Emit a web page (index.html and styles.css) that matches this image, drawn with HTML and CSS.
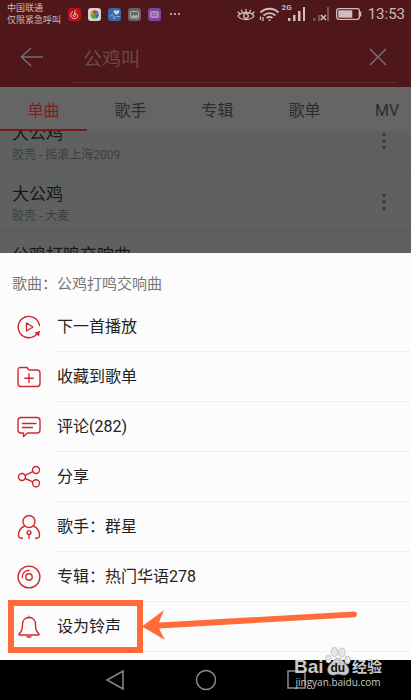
FILE: index.html
```
<!DOCTYPE html>
<html lang="zh-CN">
<head>
    <meta charset="UTF-8">
    <meta name="viewport" content="width=device-width, initial-scale=1.0">
    <title>公鸡叫</title>
    <link rel="stylesheet" href="styles.css">
</head>
<body>
    <header class="header">
        <div class="status">
            <div class="carrier">中国联通<br>仅限紧急呼叫</div>
            <div class="apps">
                <svg class="app" viewBox="0 0 13 13"><rect width="13" height="13" rx="3" fill="#b8121a"/><path d="M8 2.500C6.800 2.200 6.500 3.300 6.800 5L7.300 7.500C7.500 9 5.200 9 5.200 7.400C5.200 5.500 8.800 5 9.600 7.300C10 10.500 6 11.500 4 9.700C1.800 7.500 2.800 4.500 5 3.700" fill="none" stroke="#e3c9c9"/></svg>
                <svg class="app" viewBox="0 0 13 13"><rect width="13" height="13" rx="3" fill="#d8d3cf"/><path d="M2.300 6A4.500 4.500 0 0 1 6 2.300L8 5Z" fill="#d5891c"/><path d="M6 2.300A4.500 4.500 0 0 1 10.800 5L5 6Z" fill="#c63a35"/><path d="M10.800 5.500A4.500 4.500 0 0 1 8 10.500L6 6Z" fill="#3370b8"/><path d="M2.300 6.500L7.500 6L7.500 10.700A4.500 4.500 0 0 1 2.300 6.500" fill="#57a033"/></svg>
                <svg class="app" viewBox="0 0 13 13"><rect width="13" height="13" rx="3" fill="#3b68a8"/><path d="M8.500 7L5.800 4.500C5 2.500 7.500 1.500 8.500 3.200C9.500 1.500 12 2.500 11.200 4.500Z" fill="#d9d5dc"/><path d="M1 8H3L4.500 6L6 11L7.500 8.500H12" fill="none" stroke="#9dadd0" stroke-width=".8"/></svg>
                <svg class="app" viewBox="0 0 13 13"><rect width="13" height="13" rx="3" fill="#696468"/><rect x="2.500" y="3.500" width="8" height="6.500" rx="1" fill="none" stroke="#b9b0b2"/><path d="M3 9.500L5.500 6.500L7 8L8.500 6.500L10 9.500Z" fill="#b9b0b2"/></svg>
                <svg class="app" viewBox="0 0 13 13"><rect width="13" height="13" rx="3" fill="#8245a6"/><rect x="2.500" y="3.500" width="8" height="6" rx="1" fill="#aa86bd" stroke="#b79bc5" stroke-width=".8"/><path d="M4 5.500H9.500M4 7.500H9.500" stroke="#8245a6" stroke-dasharray="1 .8"/></svg>
                <svg class="more-apps" viewBox="0 0 12 4" fill="#d2c1c1"><circle cx="2" cy="2" r="1.100"/><circle cx="6" cy="2" r="1.100"/><circle cx="10" cy="2" r="1.100"/></svg>
            </div>
            <div class="signals">
                <svg width="20" height="16" viewBox="0 0 20 16" fill="none" stroke="#d0bebe" stroke-width="1.300" stroke-linecap="round"><path d="M2 10C5 5.300 15 5.300 18 10C15 14.700 5 14.700 2 10Z"/><circle cx="10" cy="10" r="2.300"/><path d="M10 3.500V5.500M5.500 4.200L6.300 6M14.500 4.200L13.700 6M2 6L3.500 7.500M18 6L16.500 7.500"/></svg>
                <svg width="22" height="16" viewBox="0 0 22 16" fill="none" stroke="#d0bebe" stroke-width="1.800"><path d="M2.500 6.500C7.500 1.500 15.500 1.500 20.500 6.500M5.500 9.500C9 6.200 14 6.200 17.500 9.500M8.500 12C10.500 10.300 12.500 10.300 14.500 12"/><circle cx="11.500" cy="14" r="1" fill="#d0bebe" stroke="none"/><path d="M2.500 10.500V14M5 11V15" stroke-width="1.300"/></svg>
                <span class="network">2G</span>
                <svg width="18" height="14" viewBox="0 0 18 14" fill="#d0bebe"><path d="M0 11H2.500V14H0ZM5 8H7.500V14H5ZM10 4H12.500V14H10ZM15 0H17V14H15Z"/></svg>
                <svg class="sim" width="18" height="14" viewBox="0 0 18 14"><path d="M1 11H3.500V14H1ZM6 8H8.500V14H6ZM15 0H17V14H15Z" fill="#7d5455"/><path d="M9 8L14 13M14 8L9 13" stroke="#d0bebe" stroke-width="1.500"/></svg>
                <svg class="battery" width="26" height="12" viewBox="0 0 26 12"><rect x=".7" y=".7" width="22.600" height="10.600" rx="2" fill="none" stroke="#d0bebe" stroke-width="1.300"/><rect x="2.300" y="2.300" width="14" height="7.400" fill="#d0bebe"/><path d="M24.500 3.500V8.500" stroke="#d0bebe" stroke-width="1.500"/></svg>
                <time class="time">13:53</time>
            </div>
        </div>
        <form class="search">
            <button class="icon-button" type="button" aria-label="返回">
                <svg width="24" height="20" viewBox="0 0 24 20"><path d="M23 10H1M11 1L1.500 10L11 19"/></svg>
            </button>
            <div class="search-field">
                <input class="search-input" type="text" value="公鸡叫" aria-label="搜索">
                <button class="icon-button" type="button" aria-label="清除">
                    <svg width="18" height="18" viewBox="0 0 18 18"><path d="M1 1L17 17M17 1L1 17"/></svg>
                </button>
            </div>
        </form>
    </header>

    <nav class="tabs">
        <a href="#" class="tab active">单曲</a>
        <a href="#" class="tab">歌手</a>
        <a href="#" class="tab">专辑</a>
        <a href="#" class="tab">歌单</a>
        <a href="#" class="tab tab-last">MV</a>
    </nav>

    <main class="songs">
        <ul class="song-list">
            <li class="song">
                <div>
                    <h2 class="song-name">大公鸡</h2>
                    <p class="song-info">胶壳 - 摇滚上海2009</p>
                </div>
                <button class="song-more" type="button" aria-label="更多"><svg width="4" height="18" viewBox="0 0 4 18"><circle cx="2" cy="2.500" r="1.800"/><circle cx="2" cy="9" r="1.800"/><circle cx="2" cy="15.500" r="1.800"/></svg></button>
            </li>
            <li class="song">
                <div>
                    <h2 class="song-name">大公鸡</h2>
                    <p class="song-info">胶壳 - 大麦</p>
                </div>
                <button class="song-more" type="button" aria-label="更多"><svg width="4" height="18" viewBox="0 0 4 18"><circle cx="2" cy="2.500" r="1.800"/><circle cx="2" cy="9" r="1.800"/><circle cx="2" cy="15.500" r="1.800"/></svg></button>
            </li>
            <li class="song">
                <h2 class="song-name">公鸡打鸣交响曲</h2>
            </li>
        </ul>
    </main>

    <section class="sheet">
        <h1 class="sheet-title">歌曲：公鸡打鸣交响曲</h1>
        <ul class="actions">
            <li class="action">
                <button class="action-button" type="button">
                    <svg class="icon" viewBox="0 0 24 24"><path d="M22.500 10.500A10.700 10.700 0 1 0 17.500 21.200L21.500 17.500"/><path d="M9.500 8V16L16 12Z"/><path d="M17.500 17.500L23 16L22 21.500Z" fill="#d0282e" stroke="none"/></svg>
                    <span class="label">下一首播放</span>
                </button>
            </li>
            <li class="action">
                <button class="action-button" type="button">
                    <svg class="icon" viewBox="0 0 24 24"><path d="M1 5V18.500Q1 21.500 4 21.500H20Q23 21.500 23 18.500V8Q23 5 20 5H12L10 2.500H3.500Q1 2.500 1 5ZM12 9V17.500M7.800 13.200H16.200"/></svg>
                    <span class="label">收藏到歌单</span>
                </button>
            </li>
            <li class="action">
                <button class="action-button" type="button">
                    <svg class="icon" viewBox="0 0 24 24"><path d="M4 2.500H20Q23 2.500 23 5.500V15Q23 18 20 18H10.500L6.500 21.500V18H4Q1 18 1 15V5.500Q1 2.500 4 2.500ZM5.500 8.500H19M5.500 12.500H15.500"/></svg>
                    <span class="label">评论(282)</span>
                </button>
            </li>
            <li class="action">
                <button class="action-button" type="button">
                    <svg class="icon" viewBox="0 0 24 24"><circle cx="5" cy="12" r="3.500"/><circle cx="19" cy="5" r="3.500"/><circle cx="19" cy="18.300" r="3.500"/><path d="M8.200 10.400L15.800 6.600M8.200 13.500L15.800 16.800"/></svg>
                    <span class="label">分享</span>
                </button>
            </li>
            <li class="action">
                <button class="action-button" type="button">
                    <svg class="icon" viewBox="0 0 24 24"><circle cx="12" cy="6.500" r="6"/><path d="M7.500 11C3.500 13 1.500 16 1.500 20Q1.500 23.300 4.800 23.300H5.500M16.500 11C20.500 13 22.500 16 22.500 20Q22.500 23.300 19.200 23.300H18.500"/><circle cx="12" cy="17.500" r="1.900"/><path d="M12 19.500V23.500"/></svg>
                    <span class="label">歌手：群星</span>
                </button>
            </li>
            <li class="action">
                <button class="action-button" type="button">
                    <svg class="icon" viewBox="0 0 24 24"><circle cx="12" cy="12" r="10.900"/><circle cx="12" cy="12" r="3.200"/><path d="M5.200 12.500C5.200 8.500 8 5.500 12 5.200"/></svg>
                    <span class="label">专辑：热门华语278</span>
                </button>
            </li>
            <li class="action">
                <button class="action-button" type="button">
                    <svg class="icon" viewBox="0 0 24 24"><path d="M12 2.500C7.500 2.500 5.500 6 5.500 9.500C5.500 15 4.500 16.500 2 19Q1.700 20 2.800 20H21.200Q22.300 20 22 19C19.500 16.500 18.500 15 18.500 9.500C18.500 6 16.500 2.500 12 2.500ZM12 2.500V1.200"/><path d="M9 21.300H15C14.500 23.500 9.500 23.500 9 21.300Z" fill="#d0282e" stroke="none"/></svg>
                    <span class="label">设为铃声</span>
                </button>
                <div class="mark-box"></div>
                <svg class="mark-arrow" viewBox="0 0 220 34"><path d="M2 18.500L24 2L19 14.500L214 3.500A2.800 2.800 0 0 1 214 9.200L19 20.500L25 32Z"/></svg>
            </li>
        </ul>
    </section>

    <footer class="nav-bar">
        <button class="nav-button" type="button" aria-label="返回"><svg width="20" height="22" viewBox="0 0 20 22"><path d="M18 2V20L2 11Z"/></svg></button>
        <button class="nav-button" type="button" aria-label="主页"><svg width="22" height="22" viewBox="0 0 22 22"><circle cx="11" cy="11" r="9.500"/></svg></button>
        <button class="nav-button" type="button" aria-label="最近"><svg width="20" height="20" viewBox="0 0 20 20"><rect x="1" y="1" width="17" height="17"/></svg></button>
        <div class="watermark">
            <div class="brand">
                <span>Bai</span>
                <span class="paw">
                    <svg width="26" height="29" viewBox="0 0 26 29" fill="#c9c9c9" stroke="#aaa" stroke-width=".6"><g fill="#e6e6e6"><ellipse cx="3.500" cy="12" rx="2.800" ry="4"/><ellipse cx="9.500" cy="5" rx="3.200" ry="4.500"/><ellipse cx="17" cy="5.500" rx="3.200" ry="4.500"/><ellipse cx="22.500" cy="13" rx="2.800" ry="4"/></g><path d="M13 11C9.500 11 8.500 14 5.500 17C1 21 2 28 8 28C11 28 11 27 13 27C15 27 16 28 19 28C25 28 25.500 21 20.500 17C17.500 14 16.500 11 13 11Z"/></svg>
                    <span class="du">du</span>
                </span>
                <span class="brand-cn">经验</span>
            </div>
            <div class="site">jingyan.baidu.com</div>
        </div>
    </footer>
</body>
</html>
```
FILE: styles.css
```
* {
    box-sizing: border-box;
}

body {
    margin: 0;
    height: 100vh;
    display: flex;
    flex-direction: column;
    overflow: hidden;
    background-color: #5f6160;
    color: #222;
    font-family: Roboto, "Noto Sans CJK SC", sans-serif;
}

h1, h2, p, ul {
    margin: 0;
    padding: 0;
    font-weight: 400;
}

ul {
    list-style: none;
}

svg {
    display: block;
    flex-shrink: 0;
}

button {
    margin: 0;
    padding: 0;
    border: 0;
    background: none;
    color: inherit;
    font: inherit;
}

/* header */
.header {
    background-color: #4f1719;
    border-bottom: 2px solid #6a6666;
}

.status {
    display: flex;
    align-items: center;
    height: 28px;
    padding: 0 6px 0 7px;
    color: #cbb9b9;
}

.carrier {
    width: 61px;
    font-size: 9px;
    line-height: 12px;
    white-space: nowrap;
}

.apps {
    display: flex;
    align-items: center;
    gap: 7px;
}

.app {
    width: 13px;
    height: 13px;
}

.more-apps {
    width: 14px;
    height: 4px;
}

.signals {
    display: flex;
    align-items: center;
    margin-left: auto;
    gap: 2px;
}

.network {
    align-self: flex-start;
    margin-right: -6px;
    font-size: 8px;
    font-weight: 700;
    line-height: 6px;
}

.sim {
    margin-left: 4px;
}

.battery {
    margin: 0 4px;
}

.time {
    font-size: 15px;
}

.search {
    display: flex;
    align-items: center;
    height: 59px;
    padding: 0 14px 2px 20px;
}

.icon-button {
    display: flex;
    align-items: center;
}

.icon-button svg {
    fill: none;
    stroke: #707072;
    stroke-width: 1.5;
}

.search-field {
    flex: 1;
    display: flex;
    align-items: center;
    height: 53px;
    margin-left: 29px;
    padding: 2px 10px 0;
    border-bottom: 1px solid #5c2d2c;
}

.search-input {
    flex: 1;
    min-width: 0;
    padding: 0;
    border: 0;
    outline: 0;
    background: none;
    color: #664b4c;
    font-family: inherit;
    font-size: 19px;
}

/* tabs */
.tabs {
    display: flex;
    height: 42px;
    background-color: #656565;
}

.tab {
    flex: 0 0 87px;
    color: #2d2d2d;
    font-size: 16px;
    line-height: 44px;
    text-align: center;
    text-decoration: none;
}

.tab-last {
    flex-basis: 78px;
}

.tab.active {
    border-bottom: 2px solid #761a20;
    color: #811c21;
}

/* songs behind the sheet, scrolled a little */
.songs {
    flex: 1;
    min-height: 0;
    overflow: hidden;
}

.song-list {
    margin-top: -21px;
}

.song {
    display: flex;
    justify-content: space-between;
    height: 61px;
    padding: 11px 25px 0 12px;
    border-bottom: 1px solid #595b5a;
}

.song-name {
    color: #161616;
    font-size: 17px;
    line-height: 24px;
}

.song-info {
    color: #3d3f3e;
    font-size: 12px;
    line-height: 20px;
}

.song-more {
    align-self: flex-start;
    padding-top: 11px;
}

.song-more svg {
    fill: #3a3c3b;
}

/* bottom sheet */
.sheet {
    padding-bottom: 8px;
    background-color: #fcfcfc;
}

.sheet-title {
    padding: 13px 12px 0;
    height: 49px;
    color: #777;
    font-size: 15px;
    line-height: 36px;
}

.action {
    position: relative;
    height: 50px;
}

.action-button {
    display: flex;
    align-items: center;
    width: 100%;
    height: 100%;
    padding-left: 17px;
    text-align: left;
}

.icon {
    width: 24px;
    height: 24px;
    margin-right: 13px;
    fill: none;
    stroke: #d0282e;
    stroke-width: 1.4;
    stroke-linejoin: round;
    stroke-linecap: round;
}

.label {
    flex: 1;
    padding-left: 3px;
    border-bottom: 1px solid #eee;
    font-size: 16px;
    line-height: 49px;
}

.mark-box {
    position: absolute;
    top: -2px;
    left: 8px;
    width: 135px;
    height: 53px;
    border: 6px solid #ff6b39;
}

.mark-arrow {
    position: absolute;
    top: 6px;
    left: 140px;
    width: 220px;
    height: 34px;
    fill: #ff6b39;
}

/* android navigation */
.nav-bar {
    position: relative;
    display: flex;
    justify-content: center;
    align-items: center;
    gap: 70px;
    height: 40px;
    background-color: #000;
}

.nav-button svg {
    fill: none;
    stroke: #8c8c8c;
    stroke-width: 1.5;
}

.watermark {
    position: absolute;
    right: 29px;
    bottom: 12px;
    width: 88px;
    color: #c9c9c9;
    font-family: "Liberation Sans", "Noto Sans CJK SC", sans-serif;
}

.brand {
    display: flex;
    align-items: flex-end;
    justify-content: space-between;
    height: 29px;
    font-size: 19px;
    font-weight: 700;
    line-height: 18px;
}

.paw {
    position: relative;
}

.du {
    position: absolute;
    left: 0;
    bottom: 2px;
    width: 26px;
    color: #111;
    font-size: 12px;
    line-height: 12px;
    text-align: center;
}

.brand-cn {
    font-size: 15px;
}

.site {
    font-family: "Open Sans", sans-serif;
    font-size: 10px;
    line-height: 12px;
    text-align: center;
}
```
